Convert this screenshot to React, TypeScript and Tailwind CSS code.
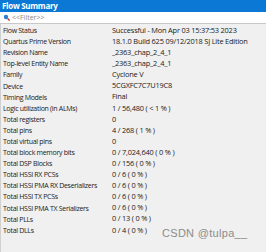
import React from 'react';

const rows: [string, string][] = [
  ['Flow Status', 'Successful - Mon Apr 03 15:37:53 2023'],
  ['Quartus Prime Version', '18.1.0 Build 625 09/12/2018 SJ Lite Edition'],
  ['Revision Name', '_2363_chap_2_4_1'],
  ['Top-level Entity Name', '_2363_chap_2_4_1'],
  ['Family', 'Cyclone V'],
  ['Device', '5CGXFC7C7U19C8'],
  ['Timing Models', 'Final'],
  ['Logic utilization (in ALMs)', '1 / 56,480 ( < 1 % )'],
  ['Total registers', '0'],
  ['Total pins', '4 / 268 ( 1 % )'],
  ['Total virtual pins', '0'],
  ['Total block memory bits', '0 / 7,024,640 ( 0 % )'],
  ['Total DSP Blocks', '0 / 156 ( 0 % )'],
  ['Total HSSI RX PCSs', '0 / 6 ( 0 % )'],
  ['Total HSSI PMA RX Deserializers', '0 / 6 ( 0 % )'],
  ['Total HSSI TX PCSs', '0 / 6 ( 0 % )'],
  ['Total HSSI PMA TX Serializers', '0 / 6 ( 0 % )'],
  ['Total PLLs', '0 / 13 ( 0 % )'],
  ['Total DLLs', '0 / 4 ( 0 % )'],
];

export default function App() {
  return (
    <div className="relative w-[266px] h-[252px] overflow-hidden bg-[#f0f0f0] font-['Open_Sans',sans-serif]">
      {/* Title bar */}
      <div className="h-[12px] bg-[#0a78d4] text-white text-[8px] font-bold leading-[12px] pl-[2px] tracking-[-0.3px]">
        Flow Summary
      </div>

      {/* Filter */}
      <div className="h-[12px] bg-white flex items-center gap-[2px] pl-[3px] border-b border-[#c8c8c8]">
        <svg width="7" height="7" viewBox="0 0 7 7">
          <circle cx="3" cy="3" r="2.2" fill="#2a7fd4" />
          <line x1="4.6" y1="4.6" x2="6.6" y2="6.6" stroke="#d8302a" strokeWidth="1.4" />
        </svg>
        <span className="text-[7px] text-[#8a8a8a] leading-none">{'<<Filter>>'}</span>
      </div>

      {/* Rows */}
      <div className="flex flex-col pt-[1px] border-l border-[#d0d0d0] h-full">
        {rows.map(([k, v]) => (
          <div key={k} className="flex h-[11.1px] items-center text-[#202020] leading-none">
            <div className="w-[111px] pl-[2px] shrink-0 whitespace-nowrap text-[7px] tracking-[-0.3px]">{k}</div>
            <div className="whitespace-nowrap text-[7.4px] tracking-[-0.2px]">{v}</div>
          </div>
        ))}
      </div>

      <div className="absolute left-[162px] top-[225px] text-[11px] text-[#8c8c8c] font-['Liberation_Sans',sans-serif] tracking-[0.3px]">
        CSDN @tulpa__
      </div>
    </div>
  );
}
